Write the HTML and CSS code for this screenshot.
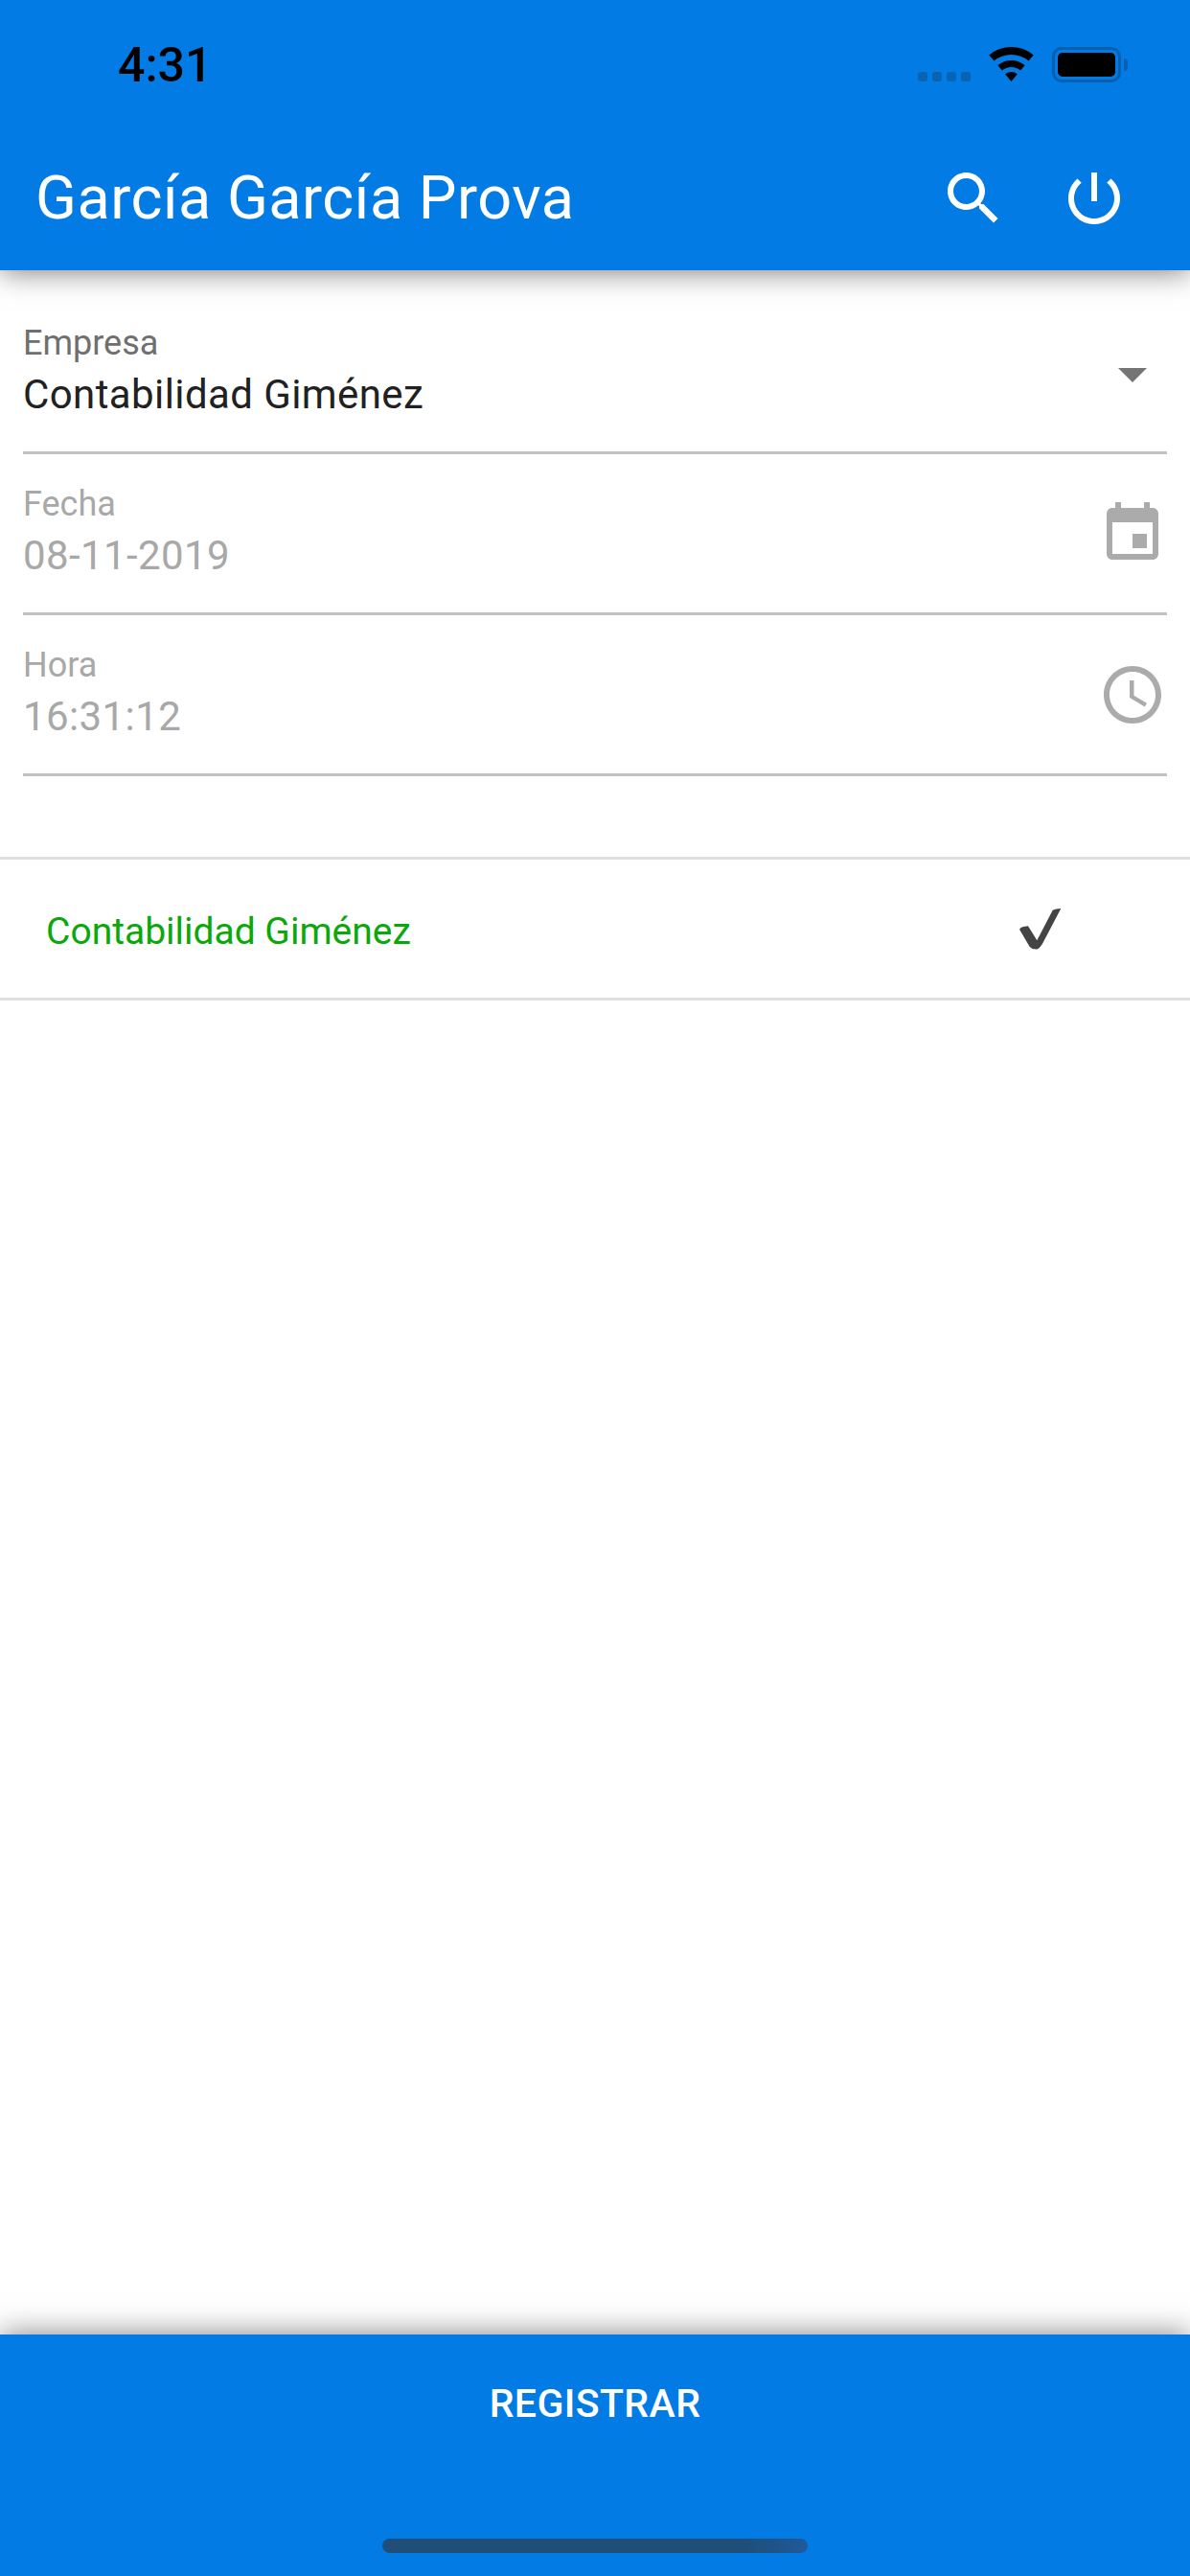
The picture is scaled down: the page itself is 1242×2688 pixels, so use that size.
FILE: index.html
```html
<!DOCTYPE html>
<html lang="es">
<head>
    <meta charset="UTF-8">
    <meta name="viewport" content="width=device-width, initial-scale=1.0">
    <title>Registrar</title>
    <link rel="stylesheet" href="styles.css">
</head>
<body>
    <header class="app-header">
        <div class="status-bar">
            <span class="time">4:31</span>
            <div class="status-icons">
                <div class="signal"><i></i><i></i><i></i><i></i></div>
                <svg class="wifi" width="47" height="36" viewBox="0 0 47 36">
                    <path d="M2.9 11.5A32 32 0 0 1 44.1 11.5" fill="none" stroke="#000" stroke-width="8"/>
                    <path d="M11.6 21.8A18.5 18.5 0 0 1 35.4 21.8" fill="none" stroke="#000" stroke-width="7"/>
                    <path d="M23.5 36L17.1 28.3A10 10 0 0 1 29.9 28.3Z" fill="#000"/>
                </svg>
                <div class="battery"><div class="battery-level"></div></div>
                <div class="battery-cap"></div>
            </div>
        </div>
        <div class="toolbar">
            <h1 class="toolbar-title">García García Prova</h1>
            <div class="toolbar-icons">
                <svg class="icon" viewBox="0 0 24 24" fill="#fff"><path d="M15.5 14h-.79l-.28-.27C15.41 12.59 16 11.11 16 9.5 16 5.91 13.09 3 9.5 3S3 5.91 3 9.5 5.91 16 9.5 16c1.61 0 3.09-.59 4.23-1.57l.27.28v.79l5 4.99L20.49 19l-4.99-5zm-6 0C7.01 14 5 11.99 5 9.5S7.01 5 9.5 5 14 7.01 14 9.5 11.99 14 9.5 14z"/></svg>
                <svg class="icon" viewBox="0 0 24 24" fill="#fff"><path d="M13 3h-2v10h2V3zm4.83 2.17l-1.42 1.42C17.99 7.86 19 9.81 19 12c0 3.87-3.13 7-7 7s-7-3.13-7-7c0-2.19 1.01-4.14 2.58-5.42L6.17 5.17C4.23 6.82 3 9.26 3 12c0 4.97 4.03 9 9 9s9-4.03 9-9c0-2.74-1.23-5.18-3.17-6.83z"/></svg>
            </div>
        </div>
    </header>

    <main class="content">
        <div class="field">
            <div class="field-text">
                <div class="field-label">Empresa</div>
                <div class="field-value">Contabilidad Giménez</div>
            </div>
            <div class="dropdown-arrow"></div>
        </div>
        <div class="field disabled">
            <div class="field-text">
                <div class="field-label">Fecha</div>
                <div class="field-value">08-11-2019</div>
            </div>
            <svg class="icon" viewBox="0 0 24 24" fill="#ababab"><path d="M17 12h-5v5h5v-5zM16 1v2H8V1H6v2H5c-1.11 0-1.99.9-1.99 2L3 19c0 1.1.89 2 2 2h14c1.1 0 2-.9 2-2V5c0-1.1-.9-2-2-2h-1V1h-2zm3 18H5V8h14v11z"/></svg>
        </div>
        <div class="field disabled">
            <div class="field-text">
                <div class="field-label">Hora</div>
                <div class="field-value">16:31:12</div>
            </div>
            <svg class="icon" viewBox="0 0 24 24" fill="#ababab"><path d="M11.99 2C6.47 2 2 6.48 2 12s4.47 10 9.99 10C17.52 22 22 17.52 22 12S17.52 2 11.99 2zM12 20c-4.42 0-8-3.58-8-8s3.58-8 8-8 8 3.58 8 8-3.58 8-8 8z"/><path d="M12.5 7H11v6l5.25 3.15.75-1.23-4.5-2.67z"/></svg>
        </div>

        <div class="company-list">
            <div class="company-row">
                <span class="company-name">Contabilidad Giménez</span>
                <svg class="check" width="44" height="43" viewBox="0 0 44 43"><path d="M0 21.7Q1 19.500 4 19L9 18.300 18.300 33.300 34.700 1.700Q38 0 43.300 0L24 36.700Q20 43 17.300 42.500 13 42.500 10.700 40Z" fill="#444"/></svg>
            </div>
        </div>
    </main>

    <footer class="app-footer">
        <button class="register-btn" type="button">REGISTRAR</button>
        <div class="home-bar"></div>
    </footer>
</body>
</html>
```
FILE: styles.css
```css
* {
    box-sizing: border-box;
}
body {
    font-family: Roboto, "Liberation Sans", sans-serif;
    margin: 0;
    padding: 0;
    width: 1242px;
    height: 2688px;
    display: flex;
    flex-direction: column;
    background-color: white;
    overflow: hidden;
}
.app-header {
    height: 282px;
    background-color: #037be4;
    box-shadow: 0 2px 28px rgba(0, 0, 0, 0.5);
    position: relative;
    z-index: 2;
}
.status-bar {
    height: 132px;
    padding: 40px 65px 0 123px;
    display: flex;
    justify-content: space-between;
    align-items: flex-start;
}
.time {
    font-size: 50px;
    font-weight: 500;
    line-height: 56px;
    color: black;
}
.status-icons {
    display: flex;
    align-items: flex-start;
    padding-top: 9px;
}
.signal {
    display: flex;
    gap: 5px;
    margin-top: 26px;
    margin-right: 19px;
}
.signal i {
    width: 10px;
    height: 10px;
    border-radius: 3px;
    background-color: #0a62b2;
}
.wifi {
    margin-right: 19px;
}
.battery {
    width: 72px;
    height: 37px;
    padding: 3px;
    border: 3px solid #0a5fae;
    border-radius: 10px;
}
.battery-level {
    width: 100%;
    height: 100%;
    background-color: black;
    border-radius: 5px;
}
.battery-cap {
    width: 4px;
    height: 13px;
    margin: 12px 0 0 3px;
    background-color: #0a5fae;
    border-radius: 0 4px 4px 0;
}
.toolbar {
    height: 150px;
    padding: 0 64px 0 37px;
    display: flex;
    justify-content: space-between;
    align-items: center;
}
.toolbar-title {
    margin: 0 0 2px;
    font-size: 63px;
    font-weight: 400;
    letter-spacing: 0.5px;
    color: white;
}
.toolbar-icons {
    display: flex;
    gap: 54px;
}
.icon {
    width: 72px;
    height: 72px;
    flex-shrink: 0;
}
.content {
    flex: 1;
    padding-top: 24px;
}
.field {
    height: 168px;
    margin: 0 24px;
    border-bottom: 3px solid #c2c2c2;
    display: flex;
    justify-content: space-between;
    align-items: center;
}
.field-text {
    align-self: flex-start;
    padding-top: 32px;
}
.field-label {
    margin-bottom: 9px;
    font-size: 36px;
    line-height: 40px;
    color: #6f6f6f;
}
.field-value {
    font-size: 42px;
    line-height: 50px;
    letter-spacing: 0.4px;
    color: #212121;
}
.dropdown-arrow {
    width: 0;
    height: 0;
    margin: 6px 21px 0 0;
    border-left: 15px solid transparent;
    border-right: 15px solid transparent;
    border-top: 15px solid #757575;
}
.disabled .field-label,
.disabled .field-value {
    color: #a8a8a8;
}
.company-list {
    margin-top: 84px;
    border-top: 3px solid #e0e0e0;
}
.company-row {
    height: 147px;
    padding: 0 134px 0 48px;
    border-bottom: 3px solid #e0e0e0;
    display: flex;
    justify-content: space-between;
    align-items: center;
}
.company-name {
    margin-top: 6px;
    font-size: 39px;
    color: #0aa80a;
}
.app-footer {
    height: 252px;
    background-color: #037be4;
    box-shadow: 0 0 30px rgba(0, 0, 0, 0.5);
    display: flex;
    flex-direction: column;
    align-items: center;
    position: relative;
}
.register-btn {
    margin-top: 40px;
    padding: 0;
    height: 64px;
    font-family: inherit;
    font-size: 41px;
    font-weight: 500;
    letter-spacing: 0.4px;
    color: white;
    background: none;
    border: none;
}
.home-bar {
    width: 444px;
    height: 15px;
    margin-top: 109px;
    border-radius: 8px;
    background: linear-gradient(to right, #1f4e79 85%, #1f5a9c);
}
```
